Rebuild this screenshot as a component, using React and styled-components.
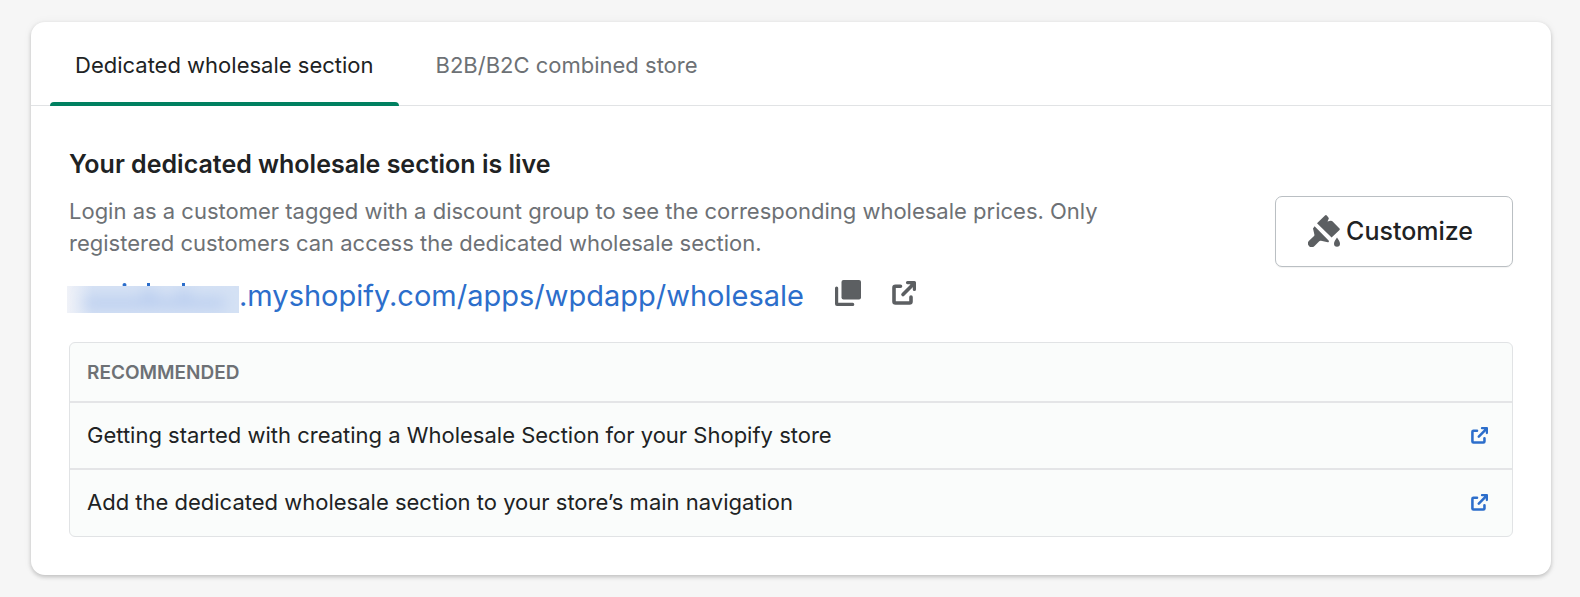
import React, { useState } from "react";
import styled, { createGlobalStyle } from "styled-components";

const GlobalStyle = createGlobalStyle`
  * {
    box-sizing: border-box;
  }

  body {
    margin: 0;
    background: #f6f6f6;
    color: #202223;
    font-family: Inter, "Liberation Sans", sans-serif;
    font-size: 22px;
    line-height: 32px;
  }
`;

const Page = styled.main`
  padding: 22px 29px 22px 31px;
`;

const Card = styled.section`
  background: #fff;
  border-radius: 14px;
  box-shadow: 0 0 10px rgba(23, 24, 24, 0.05), 0 2px 4px rgba(0, 0, 0, 0.2);
`;

const TabList = styled.div`
  display: flex;
  height: 84px;
  padding: 0 19px;
  border-bottom: 1px solid #e1e3e5;
`;

const Tab = styled.button`
  position: relative;
  height: 84px;
  padding: 2px 25px 0;
  margin-right: 12px;
  border: 0;
  background: none;
  color: ${({ $active }) => ($active ? "#202223" : "#6d7175")};
  font: inherit;
  cursor: pointer;

  &::after {
    content: "";
    position: absolute;
    left: 0;
    right: 0;
    bottom: 0;
    height: 4px;
    border-radius: 4px 4px 0 0;
    background: ${({ $active }) => ($active ? "#008060" : "transparent")};
  }
`;

const Body = styled.div`
  padding: 38px;
`;

const Intro = styled.div`
  display: flex;
  align-items: center;
  justify-content: space-between;
  gap: 40px;
`;

const Copy = styled.div`
  flex: 0 1 1060px;
`;

const Title = styled.h2`
  margin: 0 0 11px;
  font-size: 25px;
  font-weight: 600;
  line-height: 40px;
`;

const Description = styled.p`
  margin: 0;
  color: #6d7175;
`;

const LinkRow = styled.div`
  display: flex;
  align-items: center;
  margin-top: 15px;
`;

const StoreLink = styled.a`
  display: flex;
  color: #2c6ecb;
  font-size: 29px;
  line-height: 44px;
  text-decoration: none;
`;

const Mask = styled.svg`
  width: 172px;
  height: 30px;
  margin: 9px 0 0 -2px;
`;

const IconButton = styled.button`
  display: flex;
  padding: 0 0 6px;
  margin-left: 31px;
  border: 0;
  background: none;
  color: #5c5f62;
  cursor: pointer;
`;

const CustomizeButton = styled.button`
  display: flex;
  align-items: center;
  gap: 6px;
  flex: none;
  height: 71px;
  padding: 0 39px 0 32px;
  border: 1px solid #babfc3;
  border-radius: 7px;
  background: #fff;
  box-shadow: 0 1px 1px rgba(0, 0, 0, 0.05);
  color: #202223;
  font: inherit;
  font-size: 25px;
  font-weight: 500;
  cursor: pointer;

  svg {
    color: #5c5f62;
  }
`;

const Panel = styled.section`
  margin-top: 24px;
  border: 1px solid #e1e3e5;
  border-radius: 6px;
  background: #fafcfb;
`;

const PanelTitle = styled.h3`
  margin: 0;
  padding: 14px 17px 12px;
  color: #6d7175;
  font-size: 19px;
  font-weight: 600;
`;

const PanelLink = styled.a`
  display: flex;
  align-items: center;
  justify-content: space-between;
  padding: 16px 24px 17px 17px;
  border-top: 2px solid #e4e5e7;
  color: #202223;
  text-decoration: none;

  &:last-child {
    padding-bottom: 18px;
  }

  svg {
    color: #2c6ecb;
  }
`;

const ExternalIcon = ({ size }) => (
  <svg width={size} height={size} viewBox="0 0 24 24" aria-hidden="true">
    <path
      d="M8.500 5.200H3.500a1.500 1.500 0 0 0-1.500 1.500v13.800A1.500 1.500 0 0 0 3.500 22h14a1.500 1.500 0 0 0 1.500-1.500V16M11 13.500 20 4.500"
      fill="none"
      stroke="currentColor"
      strokeWidth="3.6"
      strokeLinecap="round"
    />
    <path
      d="M15.500 0H22.500A1.500 1.500 0 0 1 24 1.500V8.500a1.600 1.600 0 0 1-3.200 0V6L18 3.200H15.500a1.600 1.600 0 0 1 0-3.200z"
      fill="currentColor"
    />
  </svg>
);

const DuplicateIcon = () => (
  <svg width="26" height="26" viewBox="0 0 26 26" fill="currentColor" aria-hidden="true">
    <rect x="6.500" width="19.500" height="19.500" rx="2" />
    <path d="M1.600 6.500A1.600 1.600 0 0 1 3.200 8.100V22.800h14.500a1.600 1.600 0 0 1 0 3.200H2a2 2 0 0 1-2-2V8.100A1.600 1.600 0 0 1 1.600 6.500z" />
  </svg>
);

const PaintIcon = () => (
  <svg width="32" height="32" viewBox="0 0 32 32" fill="currentColor" aria-hidden="true">
    <path d="M17 .6a1.200 1.200 0 0 1 1.800 0L20.400 2.400a1.200 1.200 0 0 1 .2 1.500L19.500 6.500 22.500 5.800a2 2 0 0 1 1.900.5L31.500 13.500a1 1 0 0 1 0 1.400L23.600 22.500 9 8.200z" />
    <path d="M6.600 11.200 20.600 25.500a1 1 0 0 1-.8 1.700L13 25.800a2 2 0 0 0-2 .6L6.500 31A3.700 3.700 0 0 1 1 25.800L5.800 21.300a2 2 0 0 0 .5-2L5 13.500z" />
    <path d="M29 22.500c1.600 2.600 3 4.200 3 6.300a3 3 0 0 1-6 0c0-2.100 1.400-3.700 3-6.300z" />
  </svg>
);

// hides the store name, only the tops of its tall letters stick out
const StoreNameMask = () => (
  <Mask viewBox="0 0 172 30" aria-hidden="true">
    <defs>
      <linearGradient id="maskFade">
        <stop offset="0" stopColor="#f0f2f8" />
        <stop offset="0.15" stopColor="#d5e1f4" />
        <stop offset="1" stopColor="#d4e1f4" />
      </linearGradient>
      <filter id="maskBlur" x="-20%" y="-100%" width="140%" height="300%">
        <feGaussianBlur stdDeviation="7" />
      </filter>
      <clipPath id="maskClip">
        <rect y="3" width="172" height="27" />
      </clipPath>
    </defs>
    <g fill="#2c6ecb">
      <circle cx="57.500" cy="2" r="2" />
      <rect x="80" width="3" height="4" />
      <rect x="115" width="3" height="4" />
    </g>
    <rect y="3" width="172" height="27" fill="url(#maskFade)" />
    <g clipPath="url(#maskClip)">
      <g fill="#b9cdef" filter="url(#maskBlur)">
        <rect x="18" y="15" width="140" height="10" />
        <rect x="76" y="7" width="12" height="12" />
        <rect x="112" y="7" width="10" height="12" />
      </g>
    </g>
  </Mask>
);

const tabs = ["Dedicated wholesale section", "B2B/B2C combined store"];

const articles = [
  "Getting started with creating a Wholesale Section for your Shopify store",
  "Add the dedicated wholesale section to your store’s main navigation",
];

const App = () => {
  const [selected, setSelected] = useState(0);

  return (
    <>
      <GlobalStyle />
      <Page>
        <Card>
          <TabList role="tablist">
            {tabs.map((tab, index) => (
              <Tab
                key={tab}
                role="tab"
                aria-selected={index === selected}
                $active={index === selected}
                onClick={() => setSelected(index)}
              >
                {tab}
              </Tab>
            ))}
          </TabList>
          <Body>
            <Intro>
              <Copy>
                <Title>Your dedicated wholesale section is live</Title>
                <Description>
                  Login as a customer tagged with a discount group to see the corresponding
                  wholesale prices. Only registered customers can access the dedicated
                  wholesale section.
                </Description>
                <LinkRow>
                  <StoreLink href="#wholesale">
                    <StoreNameMask />
                    .myshopify.com/apps/wpdapp/wholesale
                  </StoreLink>
                  <IconButton aria-label="Copy link">
                    <DuplicateIcon />
                  </IconButton>
                  <IconButton aria-label="Open link">
                    <ExternalIcon size={24} />
                  </IconButton>
                </LinkRow>
              </Copy>
              <CustomizeButton>
                <PaintIcon />
                Customize
              </CustomizeButton>
            </Intro>
            <Panel>
              <PanelTitle>RECOMMENDED</PanelTitle>
              {articles.map((article) => (
                <PanelLink key={article} href="#article">
                  {article}
                  <ExternalIcon size={17} />
                </PanelLink>
              ))}
            </Panel>
          </Body>
        </Card>
      </Page>
    </>
  );
};

export default App;
